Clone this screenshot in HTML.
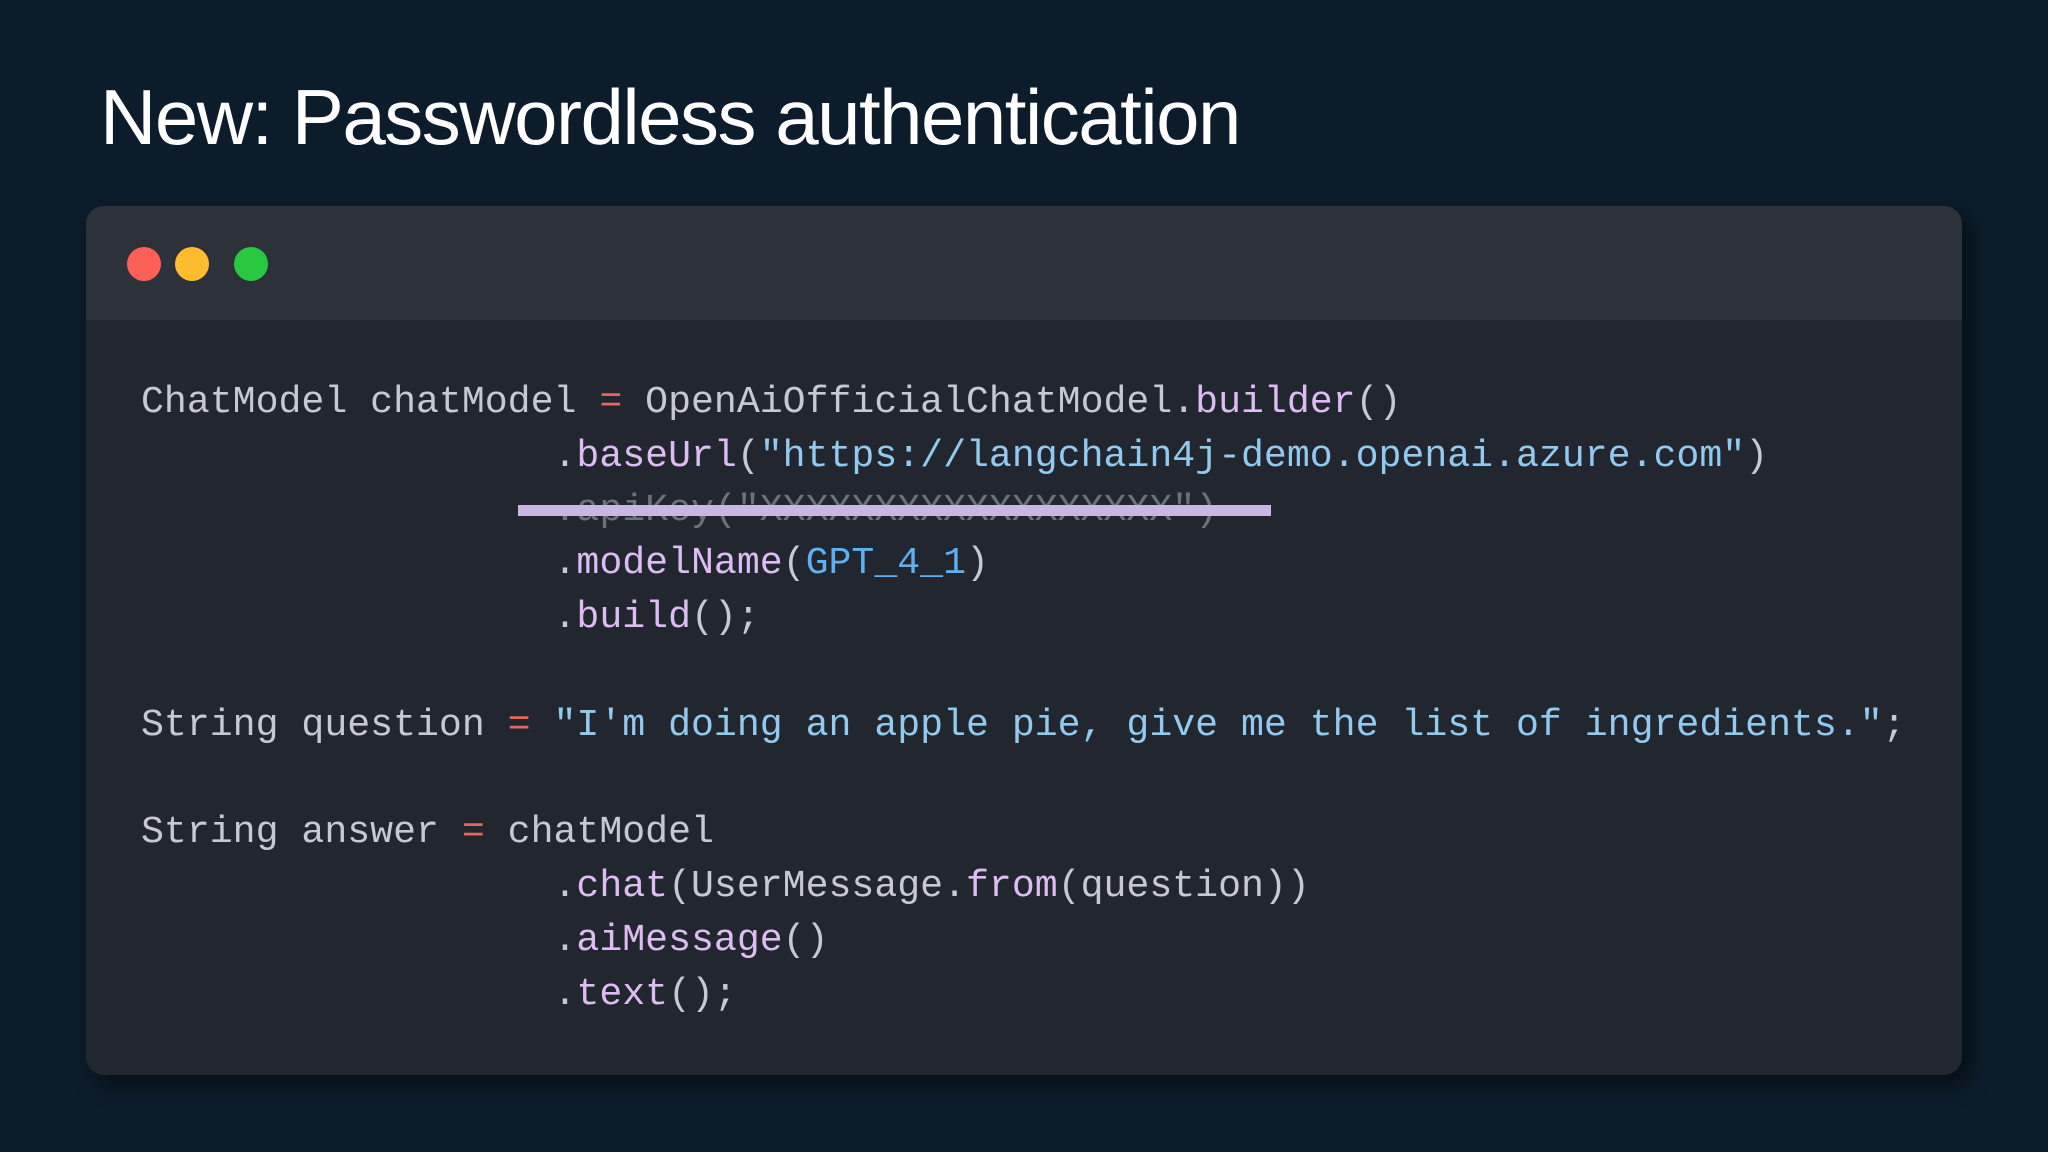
<!DOCTYPE html>
<html><head><meta charset="utf-8"><style>
html,body{margin:0;padding:0;}
body{width:2048px;height:1152px;background:#0c1c2a;position:relative;overflow:hidden;font-family:"Liberation Sans",sans-serif;}
h1{position:absolute;left:100px;top:78px;margin:0;color:#fff;font-size:78px;font-weight:400;letter-spacing:-1.5px;line-height:1;}
.card{position:absolute;left:86px;top:206px;width:1876px;height:869px;background:#22262e;border-radius:18px;overflow:hidden;box-shadow:8px 10px 20px rgba(0,0,0,0.5);}
.bar{height:114px;background:#2d3139;position:relative;}
.dot{position:absolute;top:41px;width:34px;height:34px;border-radius:50%;}
pre{position:absolute;left:55px;top:170px;margin:0;font-family:"Liberation Mono",monospace;font-size:38.2px;line-height:53.8px;color:#c6c9cf;}
.p{color:#dcbcf2}.s{color:#92c9ee}.c{color:#5fb0f0}.e{color:#e3675f}.d{color:#6c727c}
.strike{position:absolute;left:432px;top:299px;width:753px;height:11px;background:#c9b6e2;}
</style></head><body>
<h1>New: Passwordless authentication</h1>
<div class="card">
<div class="bar">
<div class="dot" style="left:41px;background:#fe5f57"></div>
<div class="dot" style="left:89px;background:#febc2e"></div>
<div class="dot" style="left:148px;background:#28c840"></div>
</div>
<pre>ChatModel chatModel <span class="e">=</span> OpenAiOfficialChatModel.<span class="p">builder</span>()
                  .<span class="p">baseUrl</span>(<span class="s">"https://langchain4j-demo.openai.azure.com"</span>)
                  <span class="d">.apiKey("XXXXXXXXXXXXXXXXXX")</span>
                  .<span class="p">modelName</span>(<span class="c">GPT_4_1</span>)
                  .<span class="p">build</span>();

String question <span class="e">=</span> <span class="s">"I'm doing an apple pie, give me the list of ingredients."</span>;

String answer <span class="e">=</span> chatModel
                  .<span class="p">chat</span>(UserMessage.<span class="p">from</span>(question))
                  .<span class="p">aiMessage</span>()
                  .<span class="p">text</span>();</pre>
<div class="strike"></div>
</div>
</body></html>
